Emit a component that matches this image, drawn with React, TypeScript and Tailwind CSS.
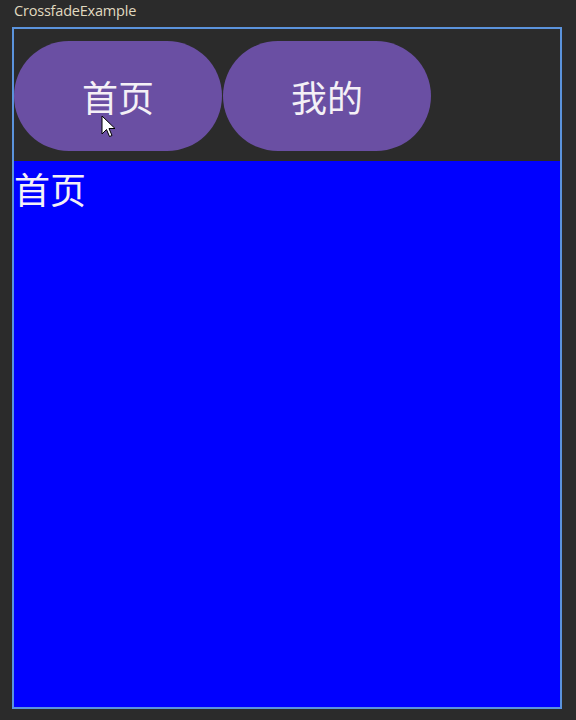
import React from "react";

const cjk = "font-['Noto_Sans_CJK_SC','Noto_Sans',sans-serif]";

function Cursor() {
  return (
    <svg
      className="absolute left-[101px] top-[115px]"
      width="16"
      height="24"
      viewBox="0 0 16 24"
    >
      <path
        d="M1 1 L1 19 L5.5 14.5 L8.5 21.5 L11 20.5 L8 13.5 L14 13.5 Z"
        fill="#ffffff"
        stroke="#000000"
        strokeWidth="1"
        strokeLinejoin="round"
      />
    </svg>
  );
}

function TabButton({ label }: { label: string }) {
  return (
    <button
      className={`${cjk} flex h-[110px] w-[208px] items-center justify-center rounded-full bg-[#6a4fa3] text-[36px] leading-none text-[#f4f0f6]`}
    >
      {label}
    </button>
  );
}

export default function App() {
  return (
    <div className="relative h-[720px] w-[576px] bg-[#2b2b2b] px-[12px] pt-[2px]">
      <div className="h-[25px] pl-[2px] font-['Open_Sans',sans-serif] text-[14.5px] leading-[18px] tracking-[-0.2px] text-[#e0dac0]">
        CrossfadeExample
      </div>
      <div className="flex h-[682px] w-[550px] flex-col border-2 border-[#5b93dc]">
        {/* Tabs */}
        <div className="flex h-[132px] items-center gap-[1px] pt-[1px]">
          <TabButton label="首页" />
          <TabButton label="我的" />
        </div>

        {/* Content */}
        <div className="flex-1 bg-[#0000ff] pt-[5px]">
          <div className={`${cjk} text-[36px] leading-[44px] text-[#f4f0f6]`}>首页</div>
        </div>
      </div>
      <Cursor />
    </div>
  );
}
